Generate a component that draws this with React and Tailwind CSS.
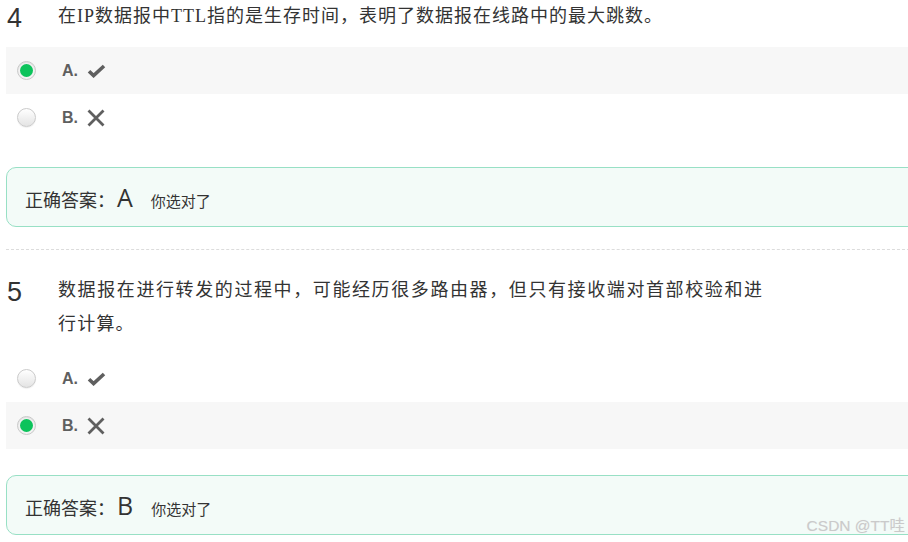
import React from "react";

const Radio = ({ checked }) => {
  if (checked) {
    return (
      <span className="flex h-[19px] w-[19px] items-center justify-center rounded-full border border-[#c9c9c9] bg-[#f2f2f2] shadow-[inset_0_1px_1px_rgba(0,0,0,0.08)]">
        <span className="h-[13px] w-[13px] rounded-full bg-[#0cc35b]" />
      </span>
    );
  }
  return (
    <span className="block h-[19px] w-[19px] rounded-full border border-[#cbcbcb] bg-gradient-to-b from-[#ffffff] to-[#e4e4e4] shadow-[0_1px_1px_rgba(0,0,0,0.06)]" />
  );
};

const Check = () => (
  <svg width="19" height="14" viewBox="0 0 19 14">
    <path
      d="M2 7.2l4.6 4.4L17 2"
      fill="none"
      stroke="#5f5f5f"
      strokeWidth="3.6"
      strokeLinecap="butt"
      strokeLinejoin="miter"
    />
  </svg>
);

const Cross = () => (
  <svg width="18" height="18" viewBox="0 0 18 18">
    <path d="M1.5 1.5l15 15M16.5 1.5l-15 15" fill="none" stroke="#5f5f5f" strokeWidth="2.8" />
  </svg>
);

const Option = ({ letter, icon, checked, shaded }) => (
  <div className={"flex h-[47px] items-center pl-[11px] " + (shaded ? "bg-[#f7f7f7]" : "")}>
    <Radio checked={checked} />
    <span className="ml-[26px] font-['Liberation_Sans',Arial,sans-serif] text-[16px] font-bold text-[#5f5f5f]">
      {letter}.
    </span>
    <span className="ml-[9px] flex items-center">{icon === "check" ? <Check /> : <Cross />}</span>
  </div>
);

const Answer = ({ letter }) => (
  <div className="mt-[26px] flex h-[60px] items-center rounded-[10px] border border-[#98e0c5] bg-[#f3fbf8] pl-[18px] pt-[3px]">
    <div className="flex items-baseline text-[#333]">
      <span className="font-['Noto_Sans_CJK_SC',sans-serif] text-[18px]">正确答案：</span>
      <span className="ml-[2px] font-['Open_Sans','Noto_Sans',sans-serif] text-[25px] leading-none">{letter}</span>
      <span className="ml-[18px] font-['Noto_Sans_CJK_SC',sans-serif] text-[15px]">你选对了</span>
    </div>
  </div>
);

const qFont = "font-['Liberation_Serif','Noto_Sans_CJK_SC',serif] text-[18px] leading-[34px] text-[#333] whitespace-nowrap";
const numFont = "w-[52px] translate-y-[2px] pl-px font-['Liberation_Sans',Arial,sans-serif] text-[27px] leading-[34px] text-[#333]";

export default function App() {
  return (
    <div className="relative h-[542px] w-[908px] overflow-hidden bg-white">
      <div className="w-[930px] pl-[6px]">
        {/* question 4 */}
        <div className="-mt-px flex h-[34px] items-start">
          <span className={numFont}>4</span>
          <p className={qFont + " tracking-[1px]"}>在IP数据报中TTL指的是生存时间，表明了数据报在线路中的最大跳数。</p>
        </div>
        <div className="mt-[14px]">
          <Option letter="A" icon="check" checked shaded />
          <Option letter="B" icon="cross" />
        </div>
        <Answer letter="A" />

        <div className="mt-[22px] border-t border-dashed border-[#dcdcdc]" />

        {/* question 5 */}
        <div className="mt-[23px] flex h-[68px] items-start">
          <span className={numFont}>5</span>
          <div className={qFont}>
            <p className="tracking-[1.6px]">数据报在进行转发的过程中，可能经历很多路由器，但只有接收端对首部校验和进</p>
            <p className="tracking-[1.2px]">行计算。</p>
          </div>
        </div>
        <div className="mt-[14px]">
          <Option letter="A" icon="check" />
          <Option letter="B" icon="cross" checked shaded />
        </div>
        <Answer letter="B" />
      </div>

      <span className="absolute bottom-[5px] right-[3px] font-['Liberation_Sans','Noto_Sans_CJK_SC',sans-serif] text-[15.5px] text-[#cacaca] [text-shadow:0_0_1px_#e8e8e8]">
        CSDN @TT哇
      </span>
    </div>
  );
}
